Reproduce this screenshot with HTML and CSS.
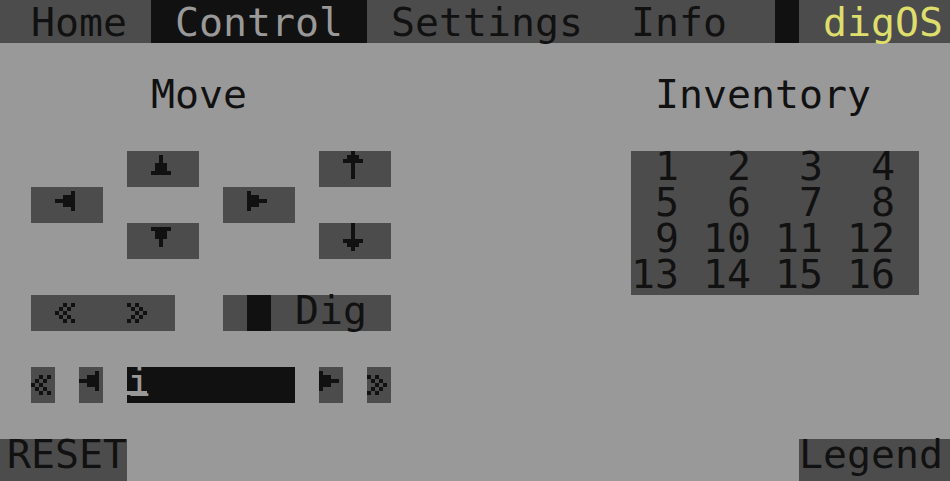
FILE: index.html
```html
<!DOCTYPE html>
<html>
<head>
<meta charset="utf-8">
<title>digOS - Control</title>
<link rel="stylesheet" href="styles.css">
</head>
<body>
<svg class="defs" width="0" height="0" aria-hidden="true">
  <defs>
    <path id="i-up" d="M2 1h1v2h-1z M1 3h3v2h-3z M0 5h5v1h-5z"/>
    <path id="i-down" d="M0 1h5v1h-5z M1 2h3v2h-3z M2 4h1v2h-1z"/>
    <path id="i-left" d="M4 1h1v5h-1z M2 2h2v3h-2z M0 3h2v1h-2z"/>
    <path id="i-right" d="M0 1h1v5h-1z M1 2h2v3h-2z M3 3h2v1h-2z"/>
    <path id="i-ascend" d="M2 0h1v7h-1z M1 1h3v1h-3z M0 2h5v1h-5z"/>
    <path id="i-descend" d="M2 0h1v7h-1z M0 4h5v1h-5z M1 5h3v1h-3z"/>
    <path id="i-first" d="M2 2h1v1h-1z M4 2h1v1h-1z M1 3h1v1h-1z M3 3h1v1h-1z M0 4h1v1h-1z M2 4h1v1h-1z M1 5h1v1h-1z M3 5h1v1h-1z M2 6h1v1h-1z M4 6h1v1h-1z"/>
    <path id="i-last" d="M0 2h1v1h-1z M2 2h1v1h-1z M1 3h1v1h-1z M3 3h1v1h-1z M2 4h1v1h-1z M4 4h1v1h-1z M1 5h1v1h-1z M3 5h1v1h-1z M0 6h1v1h-1z M2 6h1v1h-1z"/>
  </defs>
</svg>
<div class="term">
  <div class="row tabs">
    <span class="g first"> Home </span>
    <span class="k lt"> Control </span>
    <span class="g"> Settings  Info  </span>
    <span class="k"> </span>
    <span class="g last"> <span class="yel">digOS</span></span>
  </div>
  <div class="row"></div>
  <div class="row">
    <span class="bg">      Move                 Inventory   </span>
  </div>
  <div class="row"></div>
  <div class="row">
    <span class="bg">     </span>
    <span class="g"> <svg class="ic" viewBox="0 0 6 9"><use href="#i-up"/></svg> </span>
    <span class="bg">     </span>
    <span class="g"> <svg class="ic" viewBox="0 0 6 9"><use href="#i-ascend"/></svg> </span>
    <span class="bg">          </span>
    <span class="g"> 1  2  3  4 </span>
    <span class="bg"> </span>
  </div>
  <div class="row">
    <span class="bg"> </span>
    <span class="g"> <svg class="ic" viewBox="0 0 6 9"><use href="#i-left"/></svg> </span>
    <span class="bg">     </span>
    <span class="g"> <svg class="ic" viewBox="0 0 6 9"><use href="#i-right"/></svg> </span>
    <span class="bg">              </span>
    <span class="g"> 5  6  7  8 </span>
    <span class="bg"> </span>
  </div>
  <div class="row">
    <span class="bg">     </span>
    <span class="g"> <svg class="ic" viewBox="0 0 6 9"><use href="#i-down"/></svg> </span>
    <span class="bg">     </span>
    <span class="g"> <svg class="ic" viewBox="0 0 6 9"><use href="#i-descend"/></svg> </span>
    <span class="bg">          </span>
    <span class="g"> 9 10 11 12 </span>
    <span class="bg"> </span>
  </div>
  <div class="row">
    <span class="bg">                          </span>
    <span class="g">13 14 15 16 </span>
    <span class="bg"> </span>
  </div>
  <div class="row">
    <span class="bg"> </span>
    <span class="g"> <svg class="ic" viewBox="0 0 6 9"><use href="#i-first"/></svg>  <svg class="ic" viewBox="0 0 6 9"><use href="#i-last"/></svg> </span>
    <span class="bg">  </span>
    <span class="g"> </span>
    <span class="k"> </span>
    <span class="g"> Dig </span>
  </div>
  <div class="row"></div>
  <div class="row">
    <span class="bg"> </span>
    <span class="g"><svg class="ic" viewBox="0 0 6 9"><use href="#i-first"/></svg></span>
    <span class="bg"> </span>
    <span class="g"><svg class="ic" viewBox="0 0 6 9"><use href="#i-left"/></svg></span>
    <span class="bg"> </span>
    <span class="k lt"><span class="cur">i</span>      </span>
    <span class="bg"> </span>
    <span class="g"><svg class="ic" viewBox="0 0 6 9"><use href="#i-right"/></svg></span>
    <span class="bg"> </span>
    <span class="g"><svg class="ic" viewBox="0 0 6 9"><use href="#i-last"/></svg></span>
  </div>
  <div class="row"></div>
  <div class="row foot">
    <span class="g first">RESET</span>
    <span class="bg">                            </span>
    <span class="g last">Legend</span>
  </div>
</div>
</body>
</html>
```
FILE: styles.css
```css
html, body {
  margin: 0;
  padding: 0;
  background: #999999;
}
body {
  width: 950px;
  height: 481px;
  overflow: hidden;
  font-family: "DejaVu Sans Mono", monospace;
  font-size: 39.86px;
  color: #111111;
}
.defs {
  position: absolute;
  width: 0;
  height: 0;
}
.term {
  width: 950px;
  height: 481px;
  display: flex;
  flex-direction: column;
}
.row {
  display: flex;
  height: 36px;
  padding-left: 7px;
  flex: none;
}
.row > span {
  white-space: pre;
  line-height: 30px;
  height: 36px;
}
.row.tabs {
  height: 43px;
  padding-left: 0;
}
.row.tabs > span {
  height: 36px;
  padding-top: 7px;
}
.row.foot {
  height: 42px;
  padding-left: 0;
}
.row.foot > span {
  height: 42px;
}
.first {
  padding-left: 7px;
}
.last {
  padding-right: 7px;
}
.g {
  background: #4c4c4c;
  color: #111111;
}
.k {
  background: #111111;
}
.bg {
  background: #999999;
}
.lt {
  color: #999999;
}
.yel {
  color: #dede6c;
}
.ic {
  display: inline-block;
  vertical-align: top;
  width: 24px;
  height: 36px;
  fill: #111111;
  shape-rendering: crispEdges;
}
.cur {
  position: relative;
  display: inline-block;
  width: 24px;
}
.cur::after {
  content: "";
  position: absolute;
  left: 0;
  top: 24px;
  width: 20px;
  height: 4px;
  background: #999999;
}
```
